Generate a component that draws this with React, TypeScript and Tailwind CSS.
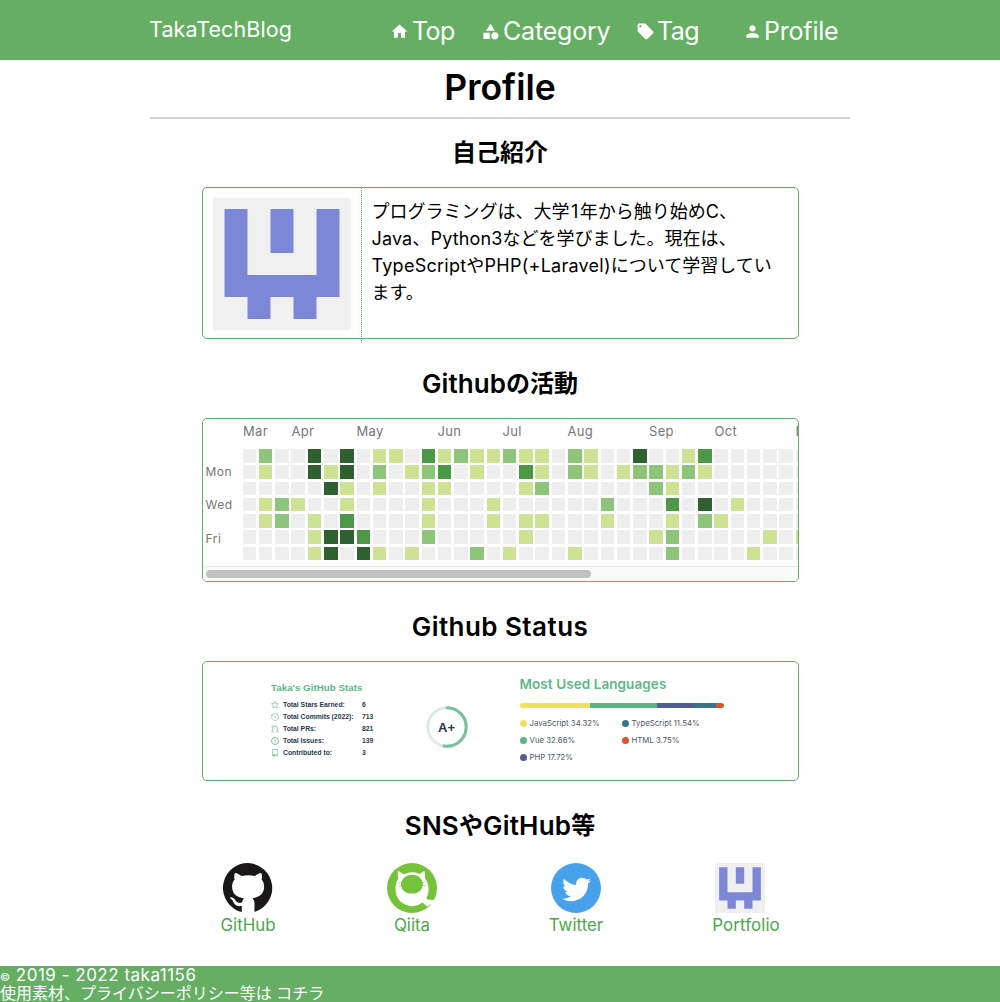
import React from 'react';
import { MdCategory, MdHome, MdLocalOffer, MdPerson } from 'react-icons/md';
import { FaTwitter } from 'react-icons/fa';
import { GoGitPullRequest, GoHistory, GoRepo, GoStar } from 'react-icons/go';

const LEVELS = ['bg-[#eeeeee]', 'bg-[#cde293]', 'bg-[#8dc67b]', 'bg-[#4b9846]', 'bg-[#2f6030]'];

const WEEKDAY_ROWS = [
  '02004040110312112110210040013000000',
  '01004140201230100310210122121000000',
  '00000410100110000120000002100000000',
  '01210010000100010000002000304010000',
  '01201030000100010110001000102100000',
  '00001443000200000100000001200000101',
  '00001404101000201000100000200001000',
];

const MONTHS = [
  { name: 'Mar', span: 'w-[48.500px]' },
  { name: 'Apr', span: 'w-[65px]' },
  { name: 'May', span: 'w-[81px]' },
  { name: 'Jun', span: 'w-[65px]' },
  { name: 'Jul', span: 'w-[65px]' },
  { name: 'Aug', span: 'w-[81.500px]' },
  { name: 'Sep', span: 'w-[65.500px]' },
  { name: 'Oct', span: 'w-[81px]' },
  { name: 'Nov', span: 'w-[65px]' },
];

function IssueIcon({ size, className }: { size: number; className: string }) {
  return (
    <svg viewBox="0 0 16 16" width={size} height={size} className={className} fill="none" stroke="currentColor">
      <circle cx="8" cy="8" r="7" strokeWidth="1.6" />
      <path d="M8 4v5M8 10.500v1.700" strokeWidth="1.600" />
    </svg>
  );
}

const STATS = [
  { Icon: GoStar, label: 'Total Stars Earned:', value: '6' },
  { Icon: GoHistory, label: 'Total Commits (2022):', value: '713' },
  { Icon: GoGitPullRequest, label: 'Total PRs:', value: '821' },
  { Icon: IssueIcon, label: 'Total Issues:', value: '139' },
  { Icon: GoRepo, label: 'Contributed to:', value: '3' },
];

const LANGUAGES = [
  { text: 'JavaScript 34.32%', color: 'bg-[#f1e05a]' },
  { text: 'Vue 32.66%', color: 'bg-[#5bb585]' },
  { text: 'PHP 17.72%', color: 'bg-[#4f5d95]' },
  { text: 'TypeScript 11.54%', color: 'bg-[#3a7489]' },
  { text: 'HTML 3.75%', color: 'bg-[#d8552f]' },
];

function Avatar({ className }: { className: string }) {
  return (
    <svg viewBox="0 0 420 420" preserveAspectRatio="none" className={className}>
      <rect width="420" height="420" fill="#f0f0f0" />
      <path
        fill="#7d87d8"
        d="M35 35h70v210h210V35h70v280h-70v70h-70v-70h-70v70h-70v-70H35zM175 35h70v140h-70z"
      />
    </svg>
  );
}

function GitHubLogo() {
  return (
    <svg viewBox="0 0 50 50" className="size-[50px]">
      <path
        fill="#191717"
        d="M25 0a25 25 0 0 0-11.500 47.200Q15.500 48.300 18.800 48.900V43C12 44 11 40 9.800 37.800 9 36.300 6.800 35.400 7 34.700c.6-1.200 3.700-.3 5.200 2.200 1.500 2.400 3.600 3.600 7 2.300.2-1.800.8-3 1.700-3.900C13.500 34.200 9.100 31 9.100 23.600c0-3 .9-5.200 2.500-7-.5-1.800-.6-4.200.3-6.700 2.300.1 4.600 1.400 6.600 3.100 4.200-1.100 9-1.100 13.200 0 2-1.700 4.300-3 6.600-3.100.9 2.500.8 4.900.3 6.700 1.600 1.800 2.500 4 2.500 7 0 7.400-4.500 10.600-11.800 11.700 1.400 1.300 2.200 3 2.200 5.200v8.400A25 25 0 0 0 25 0z"
      />
    </svg>
  );
}

function QiitaLogo() {
  return (
    <svg viewBox="0 0 50 50" className="size-[50px]">
      <circle cx="25" cy="25" r="25" fill="#76c33b" />
      <path
        fill="#fff"
        d="M10.700 7.800l6.300 3.400c5-2.700 11-2.700 15.600-.2l4.900-3.200.8 8c2.600 3.500 3.600 7.700 3.200 12-.3 3-1 5.300-2.200 7.400l2 1.500 9 .2-2.500 5-4.800-.700-2.400 2.600-5.200-4.200c-5.600 4.600-13.400 4.600-19.400.7C9.600 36.200 7.600 28.800 8.800 22c.4-2.300 1.200-4.300 2.300-6z"
      />
      <path
        fill="#76c33b"
        d="M25 11.700c6.300 0 10.800 4.200 10.800 9.700 0 5.200-4.500 9.200-10.800 9.200S14 27 14 21.800c0-5.400 4.600-10.100 11-10.100z"
      />
      <path stroke="#76c33b" strokeWidth=".6" d="M11 19.500l4 1M11.500 23l3.500-.4M35 20l4-1.200M35 22.600l4 .2" />
    </svg>
  );
}

function TwitterLogo() {
  return (
    <span className="flex size-[50px] items-center justify-center rounded-full bg-[#48a1eb] pt-[2px] text-white">
      <FaTwitter size={29} />
    </span>
  );
}

function SectionTitle({ children }: { children: React.ReactNode }) {
  return (
    <h2 className="flex h-[36px] items-center justify-center text-[24px] leading-[36px] font-semibold text-black">
      {children}
    </h2>
  );
}

function Header() {
  return (
    <header className="h-[60px] bg-[#65ae64] text-white">
      <div className="mx-auto flex h-full w-[700px]">
        <div className="w-[240px] -ml-px mr-px pt-[14px] font-['Inter',sans-serif] text-[21.500px] leading-[30px] tracking-[0.100px]">
          TakaTechBlog
        </div>
        <nav className="flex h-[40px] pt-[11px] font-['Inter',sans-serif] text-[25px] leading-[40px] tracking-[-0.2px] whitespace-nowrap">
          <a className="flex h-[40px] w-[91px] items-center tracking-[-0.600px]">
            <MdHome size={19} className="mr-[3px] shrink-0" />
            Top
          </a>
          <a className="flex h-[40px] w-[155px] items-center">
            <MdCategory size={19} className="mr-[3px] shrink-0" />
            Category
          </a>
          <a className="flex h-[40px] w-[107px] items-center tracking-[-0.600px]">
            <MdLocalOffer size={19} className="mr-[2px] shrink-0" />
            Tag
          </a>
          <a className="flex h-[40px] items-center">
            <MdPerson size={19} className="mr-[2px] shrink-0" />
            Profile
          </a>
        </nav>
      </div>
    </header>
  );
}

function ContributionCalendar() {
  return (
    <div className="mt-[16px] h-[164px] overflow-hidden rounded-[5px] border border-[#65ae64] font-['Inter',sans-serif] text-[#767676]">
      <div className="flex pt-[4px] pl-[40.500px] text-[13px] leading-[16px] tracking-[0.3px]">
        {MONTHS.map((m) => (
          <span key={m.name} className={`shrink-0 ${m.span}`}>
            {m.name}
          </span>
        ))}
      </div>
      <div className="mt-[10px] flex h-[117px]">
        <div className="w-[40.200px] shrink-0 pt-[15px] pl-[3px] text-[12px] leading-[16px] tracking-[0.5px]">
          <div className="h-[33px]">Mon</div>
          <div className="h-[34px]">Wed</div>
          <div>Fri</div>
        </div>
        <div className="flex flex-col gap-[2.75px]">
          {WEEKDAY_ROWS.map((row, y) => (
            <div key={y} className="flex gap-[2.766px]">
              {row.split('').map((level, x) => (
                <i key={x} className={`h-[13.500px] w-[13.500px] shrink-0 ${LEVELS[Number(level)]}`} />
              ))}
            </div>
          ))}
        </div>
      </div>
      <div className="h-[15px] border-t border-[#e8e8e8] bg-[#fafafa] pt-[3px] pl-[3px]">
        <div className="h-[8px] w-[385px] rounded-full bg-[#c1c1c1]" />
      </div>
    </div>
  );
}

function StatsCard() {
  return (
    <div className="flex w-[247.500px] pt-[19px] pl-[12px]">
      <div className="w-[154.500px]">
        <div className="text-[9.800px] leading-[14px] font-bold whitespace-nowrap text-[#5db885]">Taka's GitHub Stats</div>
        <div className="mt-[4px] text-[6.800px] leading-[12px] font-bold whitespace-nowrap text-[#273849]">
          {STATS.map(({ Icon, label, value }) => (
            <div key={label} className="flex h-[12px] items-center">
              <Icon size={8} className="mr-[4px] shrink-0 text-[#5db885]" />
              <span className="w-[79px]">{label}</span>
              <span>{value}</span>
            </div>
          ))}
        </div>
      </div>
      <div className="relative mt-[25px] flex size-[42px] items-center justify-center text-[13px] font-bold text-[#273849]">
        <svg viewBox="0 0 42 42" className="absolute inset-0 size-full" fill="none" strokeWidth="3">
          <circle cx="21" cy="21" r="19.2" stroke="#dbeee4" />
          <circle
            cx="21"
            cy="21"
            r="19.2"
            stroke="#79c199"
            strokeLinecap="round"
            strokeDasharray="63 200"
            transform="rotate(-90 21 21)"
          />
        </svg>
        <span className="pt-[1px]">A+</span>
      </div>
    </div>
  );
}

function LanguagesCard() {
  return (
    <div className="pt-[13px] pl-[13px]">
      <div className="font-['Inter',sans-serif] text-[13.500px] leading-[18px] font-semibold tracking-[0.080px] whitespace-nowrap text-[#5db885]">
        Most Used Languages
      </div>
      <div className="mt-[10px] flex h-[5px] w-[204px] overflow-hidden rounded-full">
        <div className="w-[70px] bg-[#f1e05a]" />
        <div className="w-[67px] bg-[#5bb585]" />
        <div className="w-[36px] bg-[#4f5d95]" />
        <div className="w-[23px] bg-[#3a7489]" />
        <div className="w-[8px] bg-[#d8552f]" />
      </div>
      <div className="mt-[7px] grid w-[204px] grid-flow-col grid-cols-2 grid-rows-3 font-['Inter',sans-serif] text-[7.800px] leading-[17px] text-[#4c5866]">
        {LANGUAGES.map((l) => (
          <div key={l.text} className="flex h-[17px] items-center whitespace-nowrap">
            <span className={`mr-[3px] size-[7px] rounded-full ${l.color}`} />
            {l.text}
          </div>
        ))}
      </div>
    </div>
  );
}

function SocialLinks() {
  const links = [
    { name: 'GitHub', logo: <GitHubLogo />, label: 'tracking-normal' },
    { name: 'Qiita', logo: <QiitaLogo />, label: 'tracking-normal' },
    { name: 'Twitter', logo: <TwitterLogo />, label: 'tracking-normal' },
    { name: 'Portfolio', logo: <Avatar className="size-[50px]" />, label: 'pl-[12px] tracking-[0.100px]' },
  ];
  return (
    <div className="mt-[19px] mr-[12px] flex w-[656px] font-['Inter',sans-serif] text-[16.900px] leading-[24px] text-[#4ea64c]">
      {links.map((l) => (
        <a key={l.name} className="flex w-[164px] flex-col items-center">
          {l.logo}
          <span className={l.label}>{l.name}</span>
        </a>
      ))}
    </div>
  );
}

export default function App() {
  return (
    <div className="flex h-[1002px] flex-col overflow-hidden bg-white font-['Liberation_Sans','Noto_Sans_CJK_JP',sans-serif] text-black">
      <Header />
      <main className="flex flex-1 flex-col items-center">
        <h1 className="h-[59px] w-[700px] border-b-2 border-[#d3d3d3] pt-[7px] text-center font-['Inter',sans-serif] text-[35.500px] leading-[42px] font-semibold">
          Profile
        </h1>
        <div className="w-[597px] pt-[16px]">
          <SectionTitle>自己紹介</SectionTitle>
          <div className="mt-[16px] flex h-[152px] rounded-[5px] border border-[#65ae64]">
            <div className="h-[155px] w-[159px] shrink-0 border-r border-dotted border-[#65ae64] pt-[10px] pl-[10px]">
              <Avatar className="h-[132px] w-[138px]" />
            </div>
            <p className="pt-[10px] pl-[10px] font-['Inter','Noto_Sans_CJK_JP',sans-serif] text-[18px] leading-[27px] whitespace-nowrap">
              プログラミングは、大学<span className="px-[1.500px]">1</span>年から触り始めC、
              <br />
              <span className="tracking-[0.150px]">Java、Python3</span>などを学びました。現在は、
              <br />
              <span className="tracking-[0.250px]">TypeScriptやPHP(+Laravel)</span>について学習してい
              <br />
              ます。
            </p>
          </div>
          <div className="h-[27px]" />
          <SectionTitle>
            <span className="font-['Inter',sans-serif] text-[26px] tracking-[0.100px]">Github</span>の活動
          </SectionTitle>
          <ContributionCalendar />
          <div className="h-[27px]" />
          <SectionTitle>
            <span className="font-['Inter',sans-serif] text-[26px] tracking-[0.450px]">Github Status</span>
          </SectionTitle>
          <div className="mt-[16px] flex h-[120px] rounded-[5px] border border-[#65ae64] pl-[56.500px]">
            <StatsCard />
            <LanguagesCard />
          </div>
          <div className="h-[27px]" />
          <SectionTitle>
            <span className="font-['Inter',sans-serif] text-[26px] tracking-[0.200px]">SNS</span>や
            <span className="font-['Inter',sans-serif] text-[26px] tracking-[0.200px]">GitHub</span>等
          </SectionTitle>
        </div>
        <SocialLinks />
      </main>
      <footer className="h-[36px] bg-[#65ae64] text-[16px] leading-[18px] whitespace-nowrap text-white">
        <div className="font-['Inter',sans-serif] text-[17px] tracking-[0.500px]">
          <span className="text-[11px]">©</span> 2019 - 2022 taka1156
        </div>
        <div className="-translate-y-px">使用素材、プライバシーポリシー等は コチラ</div>
      </footer>
    </div>
  );
}
